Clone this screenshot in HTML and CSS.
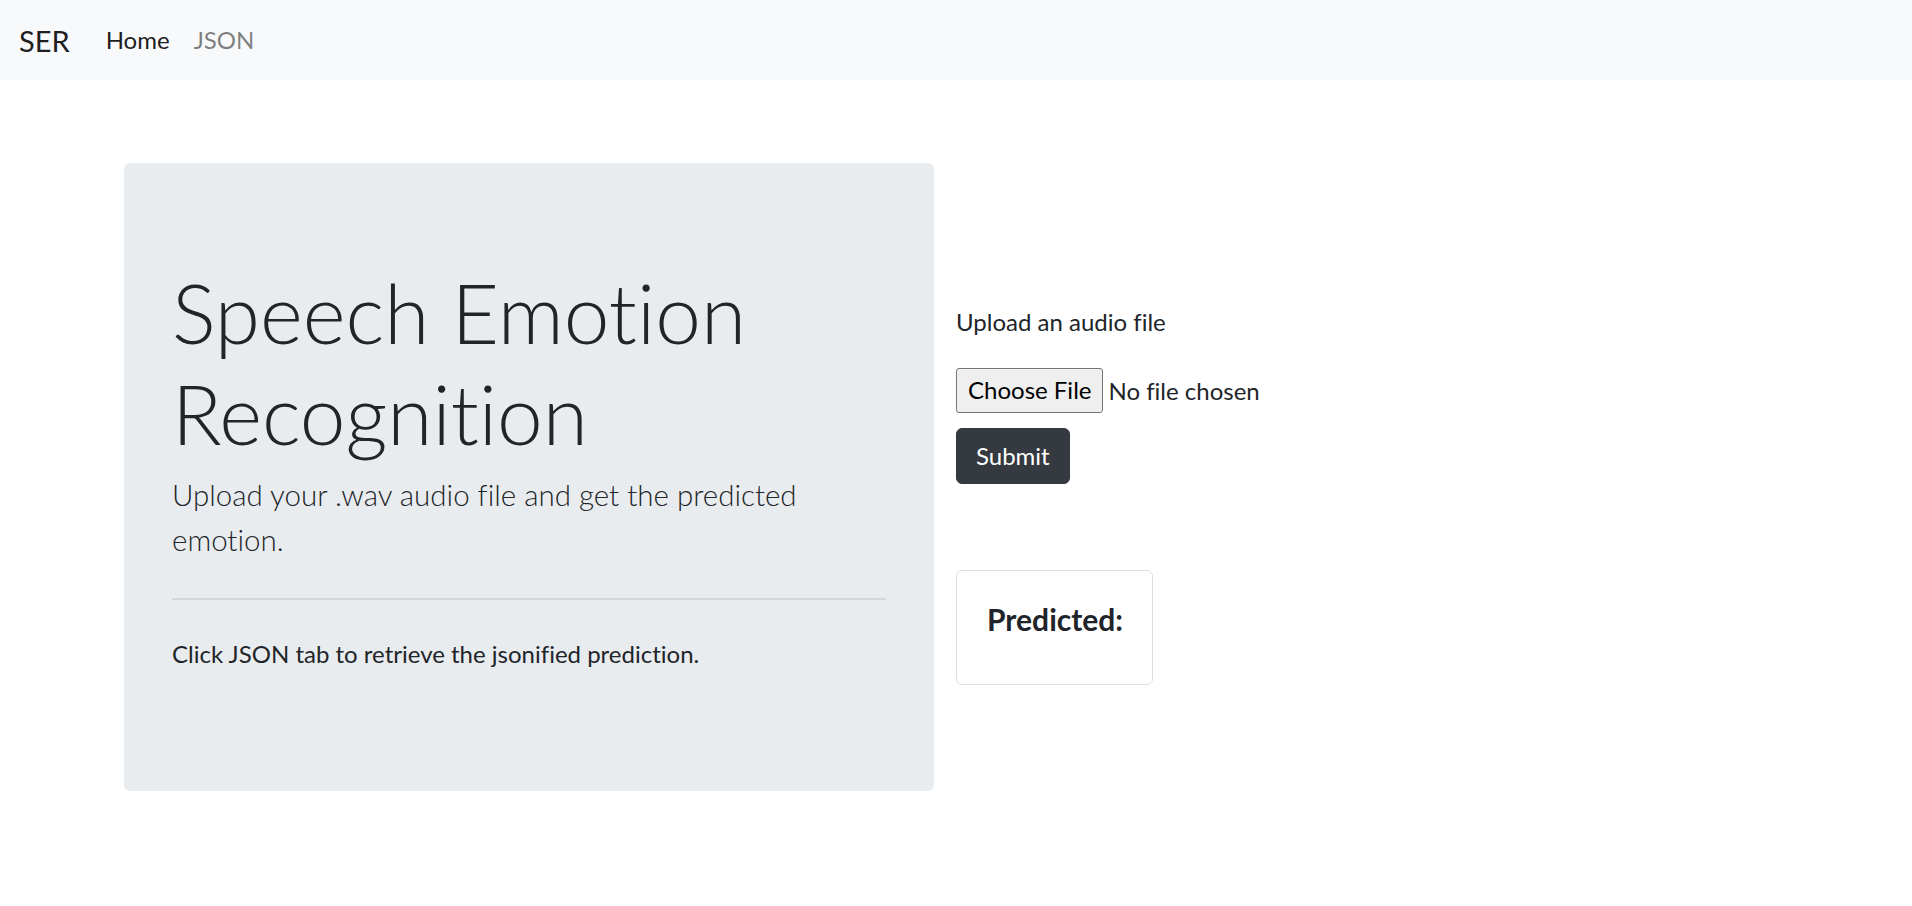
FILE: index.html
```html
<!DOCTYPE html>
<html lang="en">
<head>
<meta charset="utf-8">
<title>SER</title>
<link rel="stylesheet" href="styles.css">
</head>
<body>
<nav class="navbar">
  <a class="brand" href="#">SER</a>
  <ul class="nav">
    <li><a class="nav-link active" href="#">Home</a></li>
    <li><a class="nav-link" href="#">JSON</a></li>
  </ul>
</nav>
<main class="container">
  <section class="jumbotron">
    <h1 class="display">Speech Emotion Recognition</h1>
    <p class="lead">Upload your .wav audio file and get the predicted emotion.</p>
    <hr class="divider">
    <p class="note">Click JSON tab to retrieve the jsonified prediction.</p>
  </section>
  <section class="side">
    <form class="upload-form">
      <label class="upload-label" for="audio">Upload an audio file</label>
      <div class="file-row">
        <input class="file-input" type="file" id="audio" name="audio">
      </div>
      <button class="btn-dark" type="button">Submit</button>
    </form>
    <div class="card">
      <h5 class="card-title">Predicted:</h5>
    </div>
  </section>
</main>
</body>
</html>
```
FILE: styles.css
```css
* { box-sizing: border-box; }
html, body { margin: 0; padding: 0; }
body {
  font-family: "Lato", "Open Sans", sans-serif;
  font-size: 24px;
  line-height: 1.5;
  color: #212529;
  background: #fff;
  font-variant-ligatures: none;
  font-feature-settings: "liga" 0, "dlig" 0, "calt" 0;
}
a { text-decoration: none; }

.navbar {
  height: 80px;
  background: #f8f9fa;
  display: flex;
  align-items: center;
  padding: 0 19px;
}
.brand {
  font-size: 29px;
  color: rgba(0, 0, 0, 0.9);
  margin-right: 24px;
  line-height: 45px;
}
.nav {
  list-style: none;
  margin: 0;
  padding: 0;
  display: flex;
}
.nav-link {
  display: block;
  padding: 0 12px;
  line-height: 36px;
  color: rgba(0, 0, 0, 0.5);
}
.nav-link.active { color: rgba(0, 0, 0, 0.9); }

.container {
  display: flex;
  align-items: flex-start;
  padding: 83px 0 0 124px;
  gap: 22px;
}
.jumbotron {
  width: 810px;
  flex: none;
  background: #e9ecef;
  border-radius: 6px;
  padding: 99px 48px 95px;
}
.display {
  font-size: 82px;
  font-weight: 300;
  line-height: 100.8px;
  margin: 0 0 8px;
}
.lead {
  font-size: 29.5px;
  font-weight: 300;
  line-height: 45px;
  margin: 0 0 24px;
}
.divider {
  border: 0;
  border-top: 2px solid rgba(0, 0, 0, 0.09);
  margin: 36px 0;
}
.note {
  margin: 0 0 24px;
  line-height: 36px;
}

.side {
  padding-top: 141px;
}
.upload-form {
  display: flex;
  flex-direction: column;
  align-items: flex-start;
}
.upload-label {
  display: block;
  line-height: 36px;
  margin-bottom: 27.5px;
}
.file-row {
  height: 45px;
  margin-bottom: 15px;
}
.file-input {
  font: inherit;
  font-size: 24px;
  color: #212529;
  height: 45px;
}
.file-input::file-selector-button {
  font: inherit;
  font-size: 24px;
  color: #000;
  height: 45px;
  padding: 0 11px;
  margin-right: 5px;
  border: 1.5px solid #767676;
  border-radius: 3px;
  background: #efefef;
}
.btn-dark {
  font: inherit;
  font-size: 24px;
  line-height: 36px;
  color: #fff;
  background: #343a40;
  border: 1.5px solid #343a40;
  border-radius: 6px;
  padding: 9px 19px;
}

.card {
  margin-top: 86.5px;
  width: 197px;
  height: 115px;
  border: 1.5px solid rgba(0, 0, 0, 0.125);
  border-radius: 6px;
  padding: 30px 30px;
}
.card-title {
  margin: 0;
  font-size: 30px;
  font-weight: 700;
  line-height: 36px;
}
```
